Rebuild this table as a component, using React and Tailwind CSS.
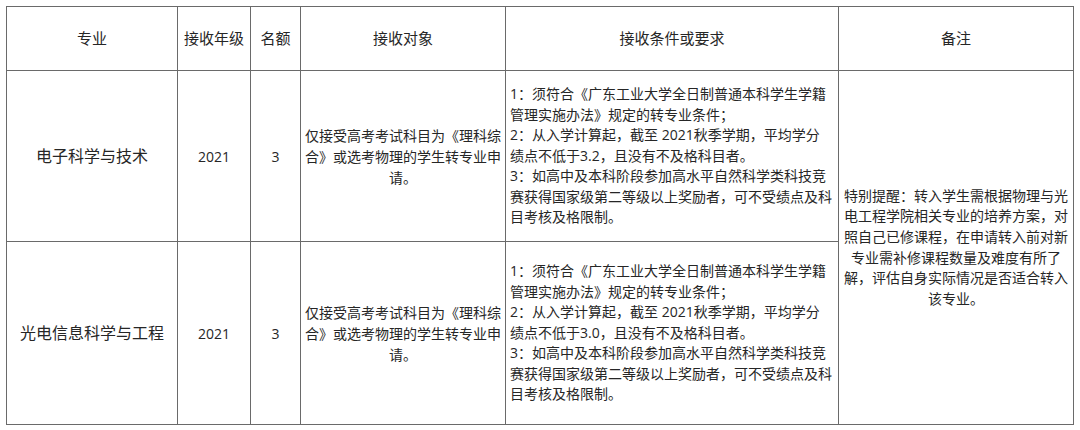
import React from 'react';

const rows = [
  {
    major: '电子科学与技术',
    grade: '2021',
    quota: '3',
    target: ['仅接受高考考试科目为《理科综', '合》或选考物理的学生转专业申', '请。'],
    gpa: '3.2',
    height: 'h-[171px]',
  },
  {
    major: '光电信息科学与工程',
    grade: '2021',
    quota: '3',
    target: ['仅接受高考考试科目为《理科综', '合》或选考物理的学生转专业申', '请。'],
    gpa: '3.0',
    height: 'h-[183px]',
  },
];

const note = [
  '特别提醒：转入学生需根据物理与光',
  '电工程学院相关专业的培养方案，对',
  '照自己已修课程，在申请转入前对新',
  '专业需补修课程数量及难度有所了',
  '解，评估自身实际情况是否适合转入',
  '该专业。',
];

const conditions = (gpa) => [
  '1：须符合《广东工业大学全日制普通本科学生学籍',
  '管理实施办法》规定的转专业条件；',
  '2：从入学计算起，截至 2021秋季学期，平均学分',
  `绩点不低于${gpa}，且没有不及格科目者。`,
  '3：如高中及本科阶段参加高水平自然科学类科技竞',
  '赛获得国家级第二等级以上奖励者，可不受绩点及科',
  '目考核及格限制。',
];

const Lines = ({ lines }) =>
  lines.map((l, i) => (
    <div key={i} className="whitespace-nowrap">
      {l}
    </div>
  ));

const cell = 'border border-[#6a6a6a] align-middle';

export default function App() {
  return (
    <div className="w-[1080px] h-[430px] bg-white pl-[6px] pt-[6px] text-[#262626] font-['Open_Sans','Noto_Sans_CJK_SC',sans-serif]">
      <table className="table-fixed border-collapse w-[1067px]">
        <colgroup>
          <col className="w-[171px]" />
          <col className="w-[73px]" />
          <col className="w-[50px]" />
          <col className="w-[205px]" />
          <col className="w-[333px]" />
          <col className="w-[235px]" />
        </colgroup>
        <thead>
          <tr className="h-[64px] text-[15px] font-normal">
            <th className={`${cell} font-normal text-center`}>专业</th>
            <th className={`${cell} font-normal text-center whitespace-nowrap`}>接收年级</th>
            <th className={`${cell} font-normal text-center`}>名额</th>
            <th className={`${cell} font-normal text-center`}>接收对象</th>
            <th className={`${cell} font-normal text-center`}>接收条件或要求</th>
            <th className={`${cell} font-normal text-center`}>备注</th>
          </tr>
        </thead>
        <tbody>
          {rows.map((r, idx) => (
            <tr key={idx} className={r.height}>
              <td className={`${cell} text-center text-[16px]`}>{r.major}</td>
              <td className={`${cell} text-center text-[14px]`}>{r.grade}</td>
              <td className={`${cell} text-center text-[14px]`}>{r.quota}</td>
              <td className={`${cell} text-center text-[14px] leading-[21px]`}>
                <Lines lines={r.target} />
              </td>
              <td className={`${cell} text-left text-[14px] leading-[20.5px] pl-[4px]`}>
                <Lines lines={conditions(r.gpa)} />
              </td>
              {idx === 0 && (
                <td rowSpan={2} className={`${cell} text-center text-[14px] leading-[20.6px]`}>
                  <Lines lines={note} />
                </td>
              )}
            </tr>
          ))}
        </tbody>
      </table>
    </div>
  );
}
